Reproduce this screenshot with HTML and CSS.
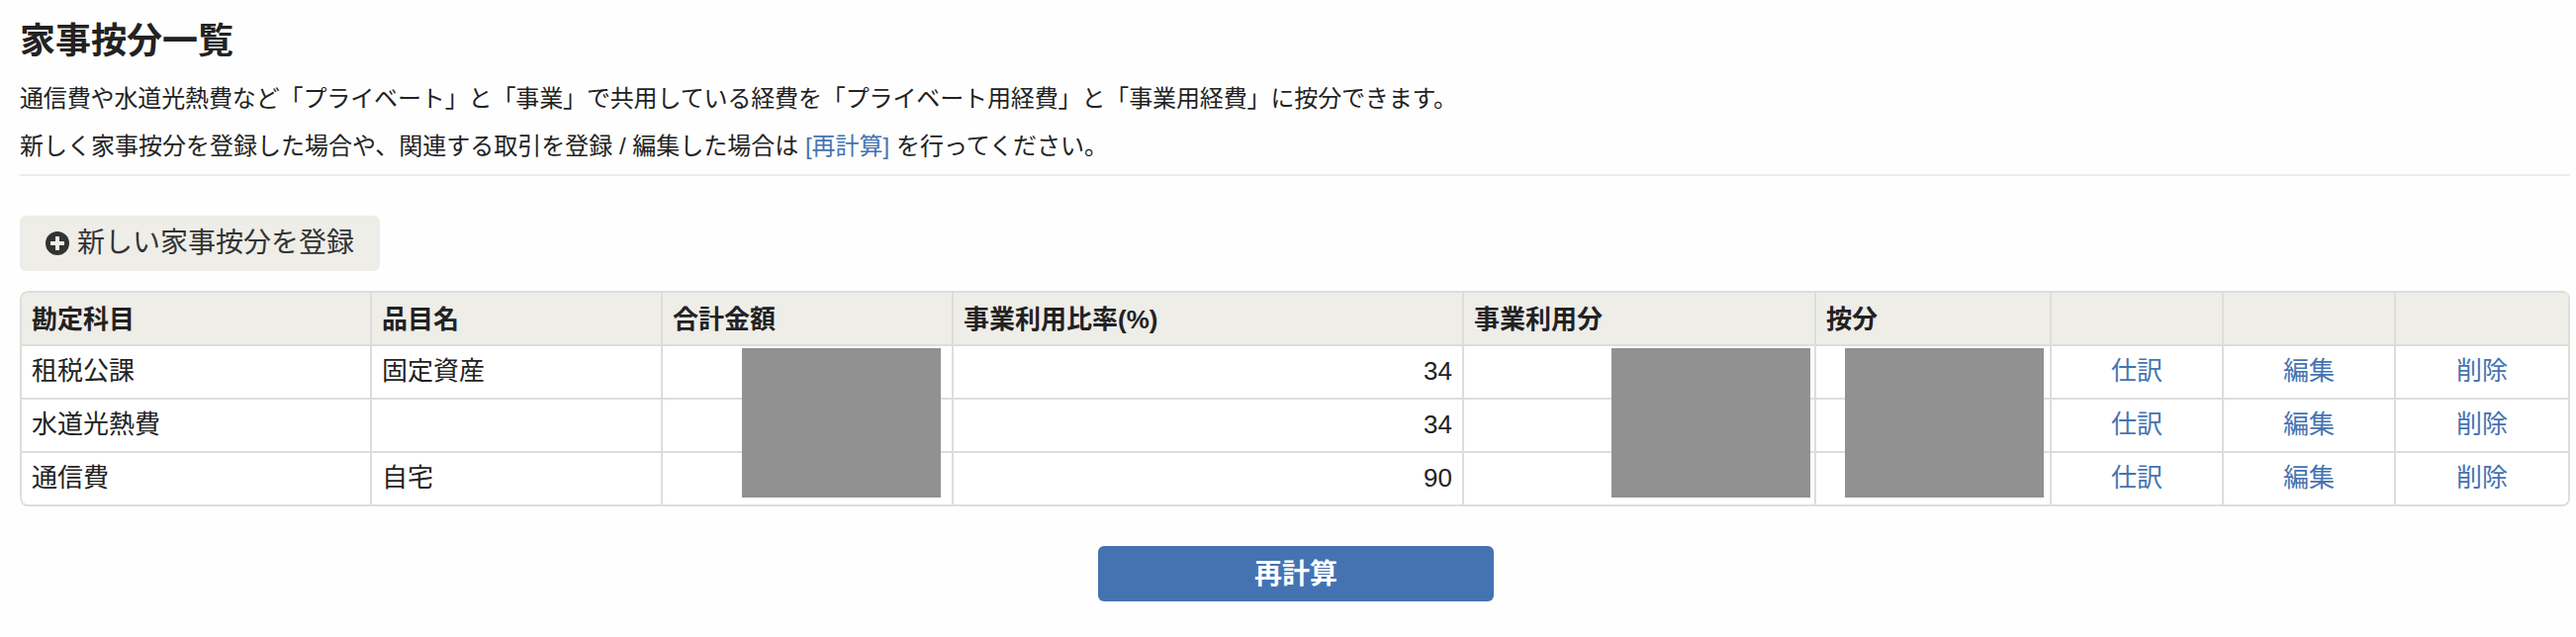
FILE: index.html
```html
<!DOCTYPE html>
<html lang="ja">
<head>
    <meta charset="UTF-8">
    <title>家事按分一覧</title>
    <link rel="stylesheet" href="styles.css">
</head>
<body>
<div id="main">
    <h1>家事按分一覧</h1>
    <div class="description">
        <p class="lead">通信費や水道光熱費など「プライベート」と「事業」で共用している経費を「プライベート用経費」と「事業用経費」に按分できます。</p>
        <p>新しく家事按分を登録した場合や、関連する取引を登録 / 編集した場合は <a href="#recalc">[再計算]</a> を行ってください。</p>
    </div>
    <a class="btn" href="#">
        <svg class="icon" viewBox="0 0 24 24">
            <circle cx="12" cy="12" r="12" fill="#333"/>
            <path d="M12 5v14M5 12h14" stroke="#eeede8" stroke-width="4"/>
        </svg>
        <span>新しい家事按分を登録</span>
    </a>
    <table>
        <colgroup>
            <col class="col-account">
            <col class="col-item">
            <col class="col-total">
            <col class="col-ratio">
            <col class="col-business">
            <col class="col-share">
            <col class="col-action">
            <col class="col-action">
            <col class="col-last">
        </colgroup>
        <thead>
        <tr>
            <th>勘定科目</th>
            <th>品目名</th>
            <th>合計金額</th>
            <th>事業利用比率(%)</th>
            <th>事業利用分</th>
            <th>按分</th>
            <th></th>
            <th></th>
            <th></th>
        </tr>
        </thead>
        <tbody>
        <tr>
            <td>租税公課</td>
            <td>固定資産</td>
            <td class="masked"><div class="mask mask-total"></div></td>
            <td class="num">34</td>
            <td class="masked"><div class="mask mask-business"></div></td>
            <td class="masked"><div class="mask mask-share"></div></td>
            <td class="action"><a href="#">仕訳</a></td>
            <td class="action"><a href="#">編集</a></td>
            <td class="action"><a href="#">削除</a></td>
        </tr>
        <tr>
            <td>水道光熱費</td>
            <td></td>
            <td></td>
            <td class="num">34</td>
            <td></td>
            <td></td>
            <td class="action"><a href="#">仕訳</a></td>
            <td class="action"><a href="#">編集</a></td>
            <td class="action"><a href="#">削除</a></td>
        </tr>
        <tr>
            <td>通信費</td>
            <td>自宅</td>
            <td></td>
            <td class="num">90</td>
            <td></td>
            <td></td>
            <td class="action"><a href="#">仕訳</a></td>
            <td class="action"><a href="#">編集</a></td>
            <td class="action"><a href="#">削除</a></td>
        </tr>
        </tbody>
    </table>
    <button id="recalc" type="button">再計算</button>
</div>
</body>
</html>
```
FILE: styles.css
```css
*{
    margin: 0;
    padding: 0;
    box-sizing: border-box;
}
body{
    font-family: "Liberation Sans", "Noto Sans CJK JP", sans-serif;
    color: #222;
    background-color: #fefefe;
}
a{
    color: #4573b2;
    text-decoration: none;
}
#main{
    padding: 18px 6px 0 20px;
}
h1{
    font-size: 36px;
    line-height: 48px;
}
.description{
    padding: 10px 0 4px;
    border-bottom: 2px solid #eeede8;
}
.description p{
    font-size: 24px;
    line-height: 48px;
}
.description .lead{
    letter-spacing: -0.13px;
}
.btn{
    display: flex;
    align-items: center;
    width: 364px;
    height: 56px;
    margin-top: 40px;
    padding-left: 26px;
    border-radius: 6px;
    background-color: #eeede8;
    color: #333;
    font-size: 28px;
    line-height: 56px;
}
.icon{
    width: 24px;
    height: 24px;
    margin-right: 8px;
}
table{
    table-layout: fixed;
    width: 2578px;
    margin-top: 20px;
    border: 2px solid #ddd;
    border-left-width: 0;
    border-top-width: 0;
    border-radius: 8px;
    border-collapse: separate;
    border-spacing: 0;
    overflow: hidden;
}
th,td{
    height: 54px;
    padding: 0 10px;
    border-left: 2px solid #ddd;
    border-top: 2px solid #ddd;
    font-size: 26px;
    text-align: left;
    white-space: nowrap;
}
th{
    padding-top: 2px;
    background-color: #eeede8;
    line-height: 50px;
}
td{
    padding-bottom: 2px;
    background-color: #fff;
    line-height: 50px;
}
th:first-child{
    border-top-left-radius: 8px;
}
tr:last-child td:first-child{
    border-bottom-left-radius: 8px;
}
.col-account{
    width: 354px;
}
.col-item,.col-total{
    width: 294px;
}
.col-ratio{
    width: 516px;
}
.col-business{
    width: 356px;
}
.col-share{
    width: 238px;
}
.col-action{
    width: 174px;
}
.col-last{
    width: 176px;
}
td.num{
    text-align: right;
}
td.action{
    text-align: center;
}
/* 金額を隠すグレーの帯 */
.masked{
    position: relative;
}
.mask{
    position: absolute;
    z-index: 1;
    top: 2px;
    width: 201px;
    height: 151px;
    background-color: #919191;
}
.mask-total{
    right: 11px;
}
.mask-business{
    right: 4px;
}
.mask-share{
    right: 6px;
}
#recalc{
    display: block;
    width: 400px;
    height: 56px;
    margin: 40px 0 0 1090px;
    padding-top: 2px;
    border: none;
    border-radius: 6px;
    background-color: #4573b2;
    color: #fff;
    font-family: inherit;
    font-size: 28px;
    font-weight: bold;
    line-height: 54px;
}
```
